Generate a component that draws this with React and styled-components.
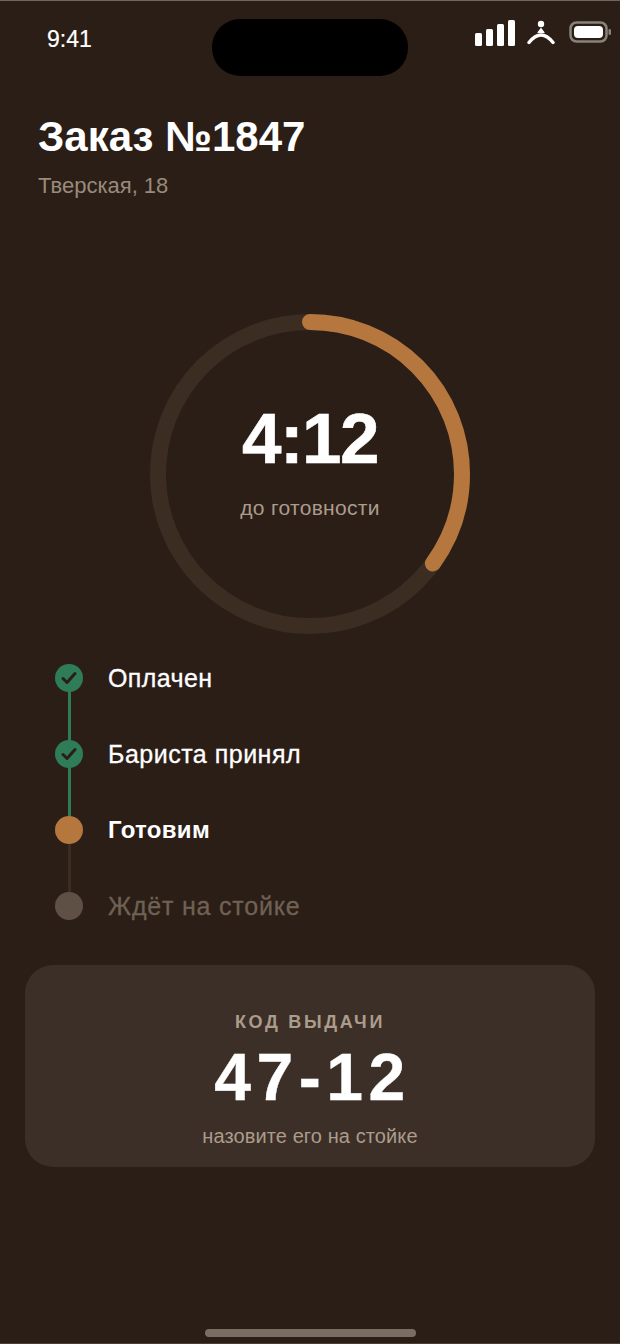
import React from "react";
import styled, { createGlobalStyle } from "styled-components";

const Global = createGlobalStyle`
  html, body { margin: 0; padding: 0; background: #2b1e17; }
  body { font-family: "Liberation Sans", Arial, sans-serif; }
  * { box-sizing: border-box; }
`;

const Screen = styled.div`
  position: relative;
  width: 620px;
  height: 1344px;
  overflow: hidden;
  background: #2b1e17;
  border-top: 1px solid #6f665f;
  border-bottom: 1px solid #4a3f38;
  color: #fff;
  display: flex;
  flex-direction: column;
`;

const StatusBar = styled.div`
  display: flex;
  align-items: flex-start;
  justify-content: space-between;
  height: 75px;
  padding: 18px 9px 0 47px;
`;

const Clock = styled.div`
  font-size: 23px;
  line-height: 40px;
  -webkit-text-stroke: 0.2px #fff;
`;

const Island = styled.div`
  position: absolute;
  top: 18px;
  left: 212px;
  width: 196px;
  height: 57px;
  border-radius: 28px;
  background: #000;
`;

const StatusIcons = styled.div`
  display: flex;
  align-items: flex-start;
  gap: 12px;
`;

const Header = styled.header`
  padding: 38px 38px 0;
`;

const Title = styled.h1`
  margin: 0;
  font-size: 42px;
  line-height: 46px;
  font-weight: 700;
`;

const Address = styled.div`
  margin-top: 14px;
  font-size: 22px;
  line-height: 24px;
  color: #998b7c;
`;

const RingWrap = styled.div`
  position: relative;
  align-self: center;
  width: 320px;
  height: 320px;
  margin-top: 116px;
`;

const RingText = styled.div`
  position: absolute;
  inset: 0;
  display: flex;
  flex-direction: column;
  align-items: center;
  padding-top: 85px;
`;

const Time = styled.div`
  font-size: 71px;
  line-height: 80px;
  font-weight: 700;
  letter-spacing: -1.5px;
  -webkit-text-stroke: 0.6px #fff;
`;

const TimeCaption = styled.div`
  margin-top: 17px;
  font-size: 21px;
  line-height: 24px;
  letter-spacing: 0.3px;
  color: #ab9c8c;
`;

const Steps = styled.ol`
  list-style: none;
  margin: 30px 0 0;
  padding: 0 0 0 55px;
`;

const Step = styled.li`
  display: flex;
  gap: 25px;
  height: ${(p) => (p.$last ? "28px" : "76px")};
`;

const Rail = styled.div`
  display: flex;
  flex-direction: column;
  align-items: center;
  width: 28px;
`;

const Dot = styled.div`
  flex: none;
  width: 28px;
  height: 28px;
  border-radius: 50%;
  display: flex;
  align-items: center;
  justify-content: center;
  background: ${(p) => p.$color};
`;

const Line = styled.div`
  flex: 1;
  width: 3px;
  background: ${(p) => p.$color};
`;

const StepLabel = styled.div`
  font-size: ${(p) => (p.$bold ? "24px" : "25px")};
  line-height: 28px;
  font-weight: ${(p) => (p.$bold ? 700 : 400)};
  letter-spacing: ${(p) => p.$spacing};
  color: ${(p) => p.$color};
  -webkit-text-stroke: ${(p) => (p.$bold ? "0" : "0.3px")} ${(p) => p.$color};
`;

const CodeCard = styled.section`
  margin: 45px 25px 0;
  height: 202px;
  border-radius: 28px;
  background: #3c2f27;
  display: flex;
  flex-direction: column;
  align-items: center;
  padding-top: 45px;
`;

const CodeLabel = styled.div`
  font-size: 18px;
  line-height: 24px;
  font-weight: 700;
  letter-spacing: 2.7px;
  color: #ab9c8c;
`;

const Code = styled.div`
  margin-top: 7px;
  padding-left: 5px;
  font-size: 66px;
  line-height: 72px;
  font-weight: 700;
  letter-spacing: 5.5px;
  -webkit-text-stroke: 0.4px #fff;
`;

const CodeHint = styled.div`
  margin-top: 11px;
  font-size: 20px;
  line-height: 24px;
  letter-spacing: 0.1px;
  color: #ab9c8c;
`;

const HomeBar = styled.div`
  position: absolute;
  left: 205px;
  bottom: 6px;
  width: 211px;
  height: 8px;
  border-radius: 4px;
  background: #7a6e64;
`;

const Check = () => (
  <svg width="16" height="14" viewBox="0 0 16 14" fill="none">
    <path d="M2 7.5 6 11.5 14 2.5" stroke="#2b1e17" strokeWidth="3" strokeLinecap="round" strokeLinejoin="round" />
  </svg>
);

const steps = [
  { label: "Оплачен", dot: "#2e7d58", text: "#ffffff", line: "#2e7d58", check: true, spacing: "0.4px" },
  { label: "Бариста принял", dot: "#2e7d58", text: "#ffffff", line: "#2e7d58", check: true, spacing: "0.5px" },
  { label: "Готовим", dot: "#b5773d", text: "#ffffff", line: "#3b2d22", bold: true, spacing: "0.3px" },
  { label: "Ждёт на стойке", dot: "#5e5044", text: "#6f6154", spacing: "0.8px" },
];

const RADIUS = 152;
const CIRC = 2 * Math.PI * RADIUS;

export default function App() {
  return (
    <Screen>
      <Global />
      <StatusBar>
        <Clock>9:41</Clock>
        <Island />
        <StatusIcons>
          <svg width="40" height="28" viewBox="0 0 40 28" fill="#fff">
            <rect x="0" y="14" width="7" height="13" rx="1.5" />
            <rect x="11" y="10" width="7" height="17" rx="1.5" />
            <rect x="22" y="5" width="7" height="22" rx="1.5" />
            <rect x="33" y="1" width="7" height="26" rx="1.5" />
          </svg>
          <svg width="30" height="28" viewBox="0 0 30 28" fill="none">
            <circle cx="14" cy="5" r="3.2" fill="#fff" />
            <path d="M11 13.5 14 9.5 17 13.5Z" fill="#fff" stroke="#fff" strokeWidth="1.2" strokeLinejoin="round" />
            <path d="M2 23.5C6 18.5 9.5 16 14 16S22 18.5 26 23.5" stroke="#fff" strokeWidth="3.4" strokeLinecap="round" />
          </svg>
          <svg width="42" height="28" viewBox="0 0 42 28" fill="none">
            <rect x="1.5" y="3.5" width="36" height="19" rx="6" stroke="#8a827b" strokeWidth="2.5" />
            <rect x="5" y="7" width="29" height="12" rx="4" fill="#fff" />
            <rect x="39.5" y="10" width="2.5" height="6" rx="1.2" fill="#8a827b" />
          </svg>
        </StatusIcons>
      </StatusBar>

      <Header>
        <Title>Заказ №1847</Title>
        <Address>Тверская, 18</Address>
      </Header>

      <RingWrap>
        <svg width="320" height="320" viewBox="0 0 320 320" fill="none">
          <circle cx="160" cy="160" r={RADIUS} stroke="#3b2d22" strokeWidth="16" />
          <circle
            cx="160"
            cy="160"
            r={RADIUS}
            stroke="#b5773d"
            strokeWidth="16"
            strokeLinecap="round"
            strokeDasharray={`${CIRC * 0.35} ${CIRC}`}
            transform="rotate(-90 160 160)"
          />
        </svg>
        <RingText>
          <Time>4:12</Time>
          <TimeCaption>до готовности</TimeCaption>
        </RingText>
      </RingWrap>

      <Steps>
        {steps.map((s, i) => (
          <Step key={s.label} $last={i === steps.length - 1}>
            <Rail>
              <Dot $color={s.dot}>{s.check && <Check />}</Dot>
              {s.line && <Line $color={s.line} />}
            </Rail>
            <StepLabel $color={s.text} $bold={s.bold} $spacing={s.spacing}>{s.label}</StepLabel>
          </Step>
        ))}
      </Steps>

      <CodeCard>
        <CodeLabel>КОД ВЫДАЧИ</CodeLabel>
        <Code>47-12</Code>
        <CodeHint>назовите его на стойке</CodeHint>
      </CodeCard>

      <HomeBar />
    </Screen>
  );
}
